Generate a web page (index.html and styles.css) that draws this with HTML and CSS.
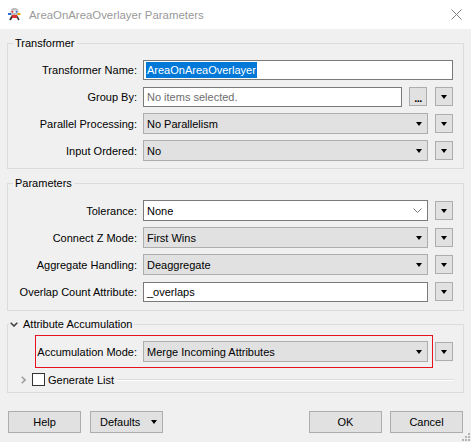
FILE: index.html
```html
<!DOCTYPE html>
<html>
<head>
<meta charset="utf-8">
<link rel="stylesheet" href="styles.css">
</head>
<body>
<div class="titlebar">
  <svg class="app-icon" width="15" height="15" viewBox="0 0 15 15">
    <path d="M3 13 L6 8" stroke="#3a3a3a" stroke-width="2"/>
    <path d="M9 8 L12 13" stroke="#3a3a3a" stroke-width="1.5"/>
    <circle cx="7.5" cy="5" r="4" fill="#b8b8b8"/>
    <rect x="4.5" y="3.5" width="6" height="2.5" fill="#fff"/>
    <circle cx="5.5" cy="4.8" r="1" fill="#d22"/>
    <circle cx="9.5" cy="4.8" r="1" fill="#2a6bd6"/>
    <rect x="5" y="8" width="5" height="3" fill="#d33"/>
    <rect x="10.5" y="6" width="3" height="2" fill="#e0b000"/>
    <rect x="1" y="6" width="3" height="2" fill="#2a6bd6"/>
  </svg>
  <span class="title">AreaOnAreaOverlayer Parameters</span>
  <svg class="close" width="11" height="11" viewBox="0 0 11 11">
    <path d="M0.5 0.5 L10.5 10.5 M10.5 0.5 L0.5 10.5" stroke="#808080" stroke-width="1"/>
  </svg>
</div>

<div class="content">
  <div class="group">
    <div class="group-head"><span class="legend">Transformer</span></div>
    <div class="rows r1">
      <div class="row">
        <span class="label">Transformer Name:</span>
        <div class="input name"><span class="sel">AreaOnAreaOverlayer</span></div>
      </div>
      <div class="row">
        <span class="label">Group By:</span>
        <div class="input groupby"><span class="placeholder">No items selected.</span></div>
        <div class="dots">...</div>
        <div class="ddbtn wide-gap"><span class="tri"></span></div>
      </div>
      <div class="row">
        <span class="label">Parallel Processing:</span>
        <div class="combo"><span>No Parallelism</span><span class="tri"></span></div>
        <div class="ddbtn"><span class="tri"></span></div>
      </div>
      <div class="row">
        <span class="label">Input Ordered:</span>
        <div class="combo"><span>No</span><span class="tri"></span></div>
        <div class="ddbtn"><span class="tri"></span></div>
      </div>
    </div>
  </div>

  <div class="group">
    <div class="group-head"><span class="legend">Parameters</span></div>
    <div class="rows r2">
      <div class="row">
        <span class="label">Tolerance:</span>
        <div class="combo white"><span>None</span>
          <svg class="chev" width="9" height="5" viewBox="0 0 9 5"><path d="M0.5 0.5 L4.5 4.5 L8.5 0.5" fill="none" stroke="#7a7a7a" stroke-width="1"/></svg>
        </div>
        <div class="ddbtn"><span class="tri"></span></div>
      </div>
      <div class="row">
        <span class="label">Connect Z Mode:</span>
        <div class="combo"><span>First Wins</span><span class="tri"></span></div>
        <div class="ddbtn"><span class="tri"></span></div>
      </div>
      <div class="row">
        <span class="label">Aggregate Handling:</span>
        <div class="combo"><span>Deaggregate</span><span class="tri"></span></div>
        <div class="ddbtn"><span class="tri"></span></div>
      </div>
      <div class="row">
        <span class="label">Overlap Count Attribute:</span>
        <div class="input overlap"><span>_overlaps</span></div>
        <div class="ddbtn"><span class="tri"></span></div>
      </div>
    </div>
  </div>

  <div class="group g3">
    <div class="group-head acc-head">
      <span class="legend acc-legend">
        <svg class="chev-down" width="8" height="5" viewBox="0 0 8 5"><path d="M0.7 0.7 L4 4 L7.3 0.7" fill="none" stroke="#404040" stroke-width="1.6"/></svg>
        <span>Attribute Accumulation</span>
      </span>
    </div>
    <div class="acc-row">
      <div class="redbox">
        <span class="label acc-label">Accumulation Mode:</span>
        <div class="combo"><span>Merge Incoming Attributes</span><span class="tri"></span></div>
      </div>
      <div class="ddbtn acc-btn"><span class="tri"></span></div>
    </div>
    <div class="gen-row">
      <svg class="chev-right" width="5" height="8" viewBox="0 0 5 8"><path d="M0.7 0.7 L4 4 L0.7 7.3" fill="none" stroke="#a0a0a0" stroke-width="1.6"/></svg>
      <span class="checkbox"></span>
      <span class="gen-text">Generate List</span>
      <span class="gen-line"></span>
    </div>
  </div>
</div>

<div class="footer">
  <div class="btn">Help</div>
  <div class="btn defaults"><span>Defaults</span><span class="tri"></span></div>
  <div class="spacer"></div>
  <div class="btn">OK</div>
  <div class="btn">Cancel</div>
</div>

<svg class="grip" width="8" height="8" viewBox="0 0 8 8">
  <rect x="6" y="0" width="2" height="2" fill="#b4b4b4"/>
  <rect x="3" y="3" width="2" height="2" fill="#b4b4b4"/>
  <rect x="6" y="3" width="2" height="2" fill="#b4b4b4"/>
  <rect x="0" y="6" width="2" height="2" fill="#b4b4b4"/>
  <rect x="3" y="6" width="2" height="2" fill="#b4b4b4"/>
  <rect x="6" y="6" width="2" height="2" fill="#b4b4b4"/>
</svg>
</body>
</html>
```

FILE: styles.css
```css
html, body {
  margin: 0;
  padding: 0;
}
body {
  width: 471px;
  height: 442px;
  overflow: hidden;
  position: relative;
  background: #f0f0f0;
  font-family: "Liberation Sans", Arial, sans-serif;
  font-size: 11px;
  color: #000;
}

.titlebar {
  height: 29px;
  background: #fff;
  display: flex;
  align-items: center;
  padding: 0 9px 0 7px;
}
.app-icon {
  margin-right: 7px;
}
.title {
  flex: 1;
  color: #999;
  font-size: 11.4px;
}

.content {
  padding: 0 7px;
}
.group {
  border: 1px solid #dcdcdc;
  margin-top: 14px;
}
.g3 {
  margin-top: 13px;
  padding-bottom: 6px;
}
.group-head {
  height: 14px;
  margin-top: -8px;
  display: flex;
  align-items: center;
  padding-left: 5px;
}
.legend {
  background: #f0f0f0;
  padding: 0 2px;
  line-height: 14px;
}
.rows {
  display: flex;
  flex-direction: column;
  gap: 6px;
}
.r1 {
  padding: 9px 0 7px;
}
.r2 {
  padding: 10px 0 8px;
}
.row {
  display: flex;
  align-items: center;
  height: 21px;
}
.label {
  width: 129px;
  margin-right: 6px;
  text-align: right;
  white-space: nowrap;
}

.input {
  box-sizing: border-box;
  height: 20px;
  border: 1px solid #7a7a7a;
  background: #fff;
  display: flex;
  align-items: center;
  padding-left: 2px;
  white-space: nowrap;
  overflow: hidden;
}
.input.name {
  width: 310px;
}
.input.groupby {
  width: 259px;
}
.input.overlap {
  width: 285px;
  padding-left: 3px;
}
.sel {
  background: #0078d7;
  color: #fff;
  line-height: 16px;
  padding: 0 1px;
}
.placeholder {
  color: #6d6d6d;
  padding-left: 1px;
}

.combo {
  box-sizing: border-box;
  width: 285px;
  height: 21px;
  border: 1px solid #adadad;
  background: #e1e1e1;
  display: flex;
  align-items: center;
  justify-content: space-between;
  padding: 0 5px 0 3px;
  white-space: nowrap;
}
.combo.white {
  background: #fff;
  border-color: #7a7a7a;
}
.chev {
  margin-right: 0;
}

.tri {
  width: 0;
  height: 0;
  border-left: 3.5px solid transparent;
  border-right: 3.5px solid transparent;
  border-top: 4px solid #000;
}

.ddbtn {
  box-sizing: border-box;
  width: 18px;
  height: 19px;
  margin-left: 7px;
  border: 1px solid #adadad;
  background: #e1e1e1;
  display: flex;
  align-items: center;
  justify-content: center;
}
.ddbtn.wide-gap {
  margin-left: 8px;
}
.dots {
  box-sizing: border-box;
  width: 18px;
  height: 19px;
  margin-left: 7px;
  border: 1px solid #adadad;
  background: #e1e1e1;
  display: flex;
  justify-content: center;
  align-items: flex-end;
  line-height: 13px;
  font-weight: bold;
  letter-spacing: -0.5px;
}

.acc-head {
  padding-left: 1px;
}
.acc-legend {
  display: flex;
  align-items: center;
  padding: 0 2px 0 1px;
}
.chev-down {
  margin-right: 5px;
}
.acc-row {
  display: flex;
  align-items: center;
  margin: 4px 0 0 27px;
}
.redbox {
  border: 1px solid #e81123;
  display: flex;
  align-items: center;
  padding: 5px 4px 5px 0;
}
.acc-label {
  width: 101px;
}
.acc-btn {
  margin-left: 2px;
}

.gen-row {
  display: flex;
  align-items: center;
  height: 13px;
  margin: 5px 9px 0 13px;
}
.checkbox {
  box-sizing: border-box;
  width: 13px;
  height: 13px;
  margin-left: 6px;
  border: 1px solid #333;
  background: #fff;
}
.gen-text {
  margin-left: 3px;
  white-space: nowrap;
}
.gen-line {
  flex: 1;
  margin-left: 3px;
  border-top: 1px solid #dcdcdc;
  border-bottom: 1px solid #fff;
}

.footer {
  display: flex;
  margin-top: 18px;
  padding: 0 8px;
}
.btn {
  box-sizing: border-box;
  width: 73px;
  height: 22px;
  border: 1px solid #adadad;
  background: #e1e1e1;
  display: flex;
  align-items: center;
  justify-content: center;
}
.btn + .btn {
  margin-left: 8px;
}
.btn.defaults {
  margin-left: 9px;
  justify-content: flex-start;
  padding: 0 5px 0 9px;
}
.btn.defaults .tri {
  margin-left: auto;
}
.spacer {
  flex: 1;
}
.spacer + .btn {
  margin-left: 0;
}

.grip {
  position: absolute;
  right: 1px;
  bottom: 1px;
}
```
